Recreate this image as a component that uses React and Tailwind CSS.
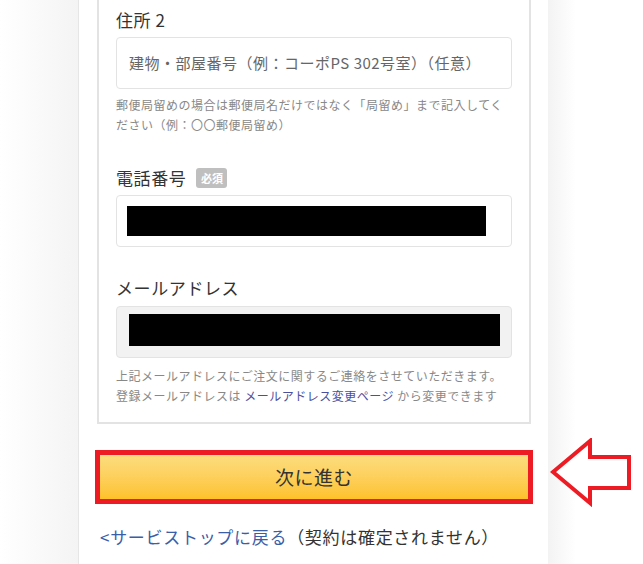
const jp = { fontFamily: '"Noto Sans CJK JP", "Noto Sans", sans-serif' };

const Label = ({ children, required }) => (
    <div className="flex items-center h-[24px] leading-[24px] text-[17px] tracking-[0.6px] text-[#333]">
        <span>{children}</span>
        {required && (
            <span className="ml-[10px] w-[31px] h-[20px] rounded-[3px] bg-[#bfbfbf] text-white text-[11px] font-bold tracking-normal leading-[20px] text-center">
                必須
            </span>
        )}
    </div>
);

const Help = ({ children, className = '' }) => (
    <p className={`text-[12px] leading-[20px] tracking-[0.5px] text-[#888] whitespace-nowrap ${className}`}>{children}</p>
);

export default function App() {
    return (
        <div className="relative flex w-[643px] h-[564px] overflow-hidden bg-white" style={jp}>
            {/* left gutter */}
            <div className="w-[79px] shrink-0 bg-gradient-to-r from-white to-[#f4f4f4] border-r border-[#e6e6e6]"></div>

            {/* main column */}
            <div className="w-[469px] shrink-0 bg-white">
                <div className="ml-[18px] mr-[17px] border-x-2 border-b-2 border-[#e3e3e3] px-[17px] pb-[16px]">
                    <div className="pt-[8px]">
                        <Label>住所 2</Label>
                        <div className="mt-[5px] h-[52px] rounded-[4px] border border-[#e3e3e3] flex items-center pl-[12px] text-[15px] tracking-[0.5px] text-[#666]">
                            建物・部屋番号（例：コーポPS 302号室）（任意）
                        </div>
                        <Help className="mt-[6px]">
                            郵便局留めの場合は郵便局名だけではなく「局留め」まで記入してく
                            <br />
                            ださい（例：〇〇郵便局留め）
                        </Help>
                    </div>

                    <div className="mt-[31px]">
                        <Label required>電話番号</Label>
                        <div className="mt-[5px] h-[52px] rounded-[4px] border border-[#e3e3e3] pl-[10px] pt-[10px]">
                            <div className="w-[359px] h-[30px] bg-black"></div>
                        </div>
                    </div>

                    <div className="mt-[29px]">
                        <Label>メールアドレス</Label>
                        <div className="mt-[6px] h-[52px] rounded-[4px] border border-[#e3e3e3] bg-[#f2f2f2] pl-[12px] pt-[7px]">
                            <div className="w-[371px] h-[32px] bg-black"></div>
                        </div>
                        <Help className="mt-[8px]">
                            上記メールアドレスにご注文に関するご連絡をさせていただきます。
                            <br />
                            登録メールアドレスは <span className="text-[#4b4f9c]">メールアドレス変更ページ</span> から変更できます
                        </Help>
                    </div>
                </div>

                <div className="mt-[26px] ml-[16px] mr-[15px] h-[54px] border-[5px] border-[#ed1c24] bg-gradient-to-b from-[#fcdd7e] to-[#fec227] flex items-center justify-center text-[19px] tracking-[0.5px] text-[#333]">
                    次に進む
                </div>

                <div className="mt-[21px] ml-[21px] h-[24px] leading-[24px] text-[17px] tracking-[0.7px] whitespace-nowrap">
                    <span className="text-[#3b5ea8]">&lt;サービストップに戻る</span>
                    <span className="text-[#333]">（契約は確定されません）</span>
                </div>
            </div>

            {/* right gutter */}
            <div className="w-[28px] shrink-0 bg-gradient-to-r from-[#f3f3f3] to-white"></div>
            <div className="flex-1 bg-white"></div>

            {/* annotation arrow */}
            <svg className="absolute left-[550px] top-[438px]" width="84" height="70" viewBox="0 0 84 70">
                <polygon
                    points="3,34 40,3 40,19 79,19 79,50 40,50 40,65"
                    fill="white"
                    stroke="#ed1c24"
                    strokeWidth="4"
                    strokeLinejoin="miter"
                />
            </svg>
        </div>
    );
}
